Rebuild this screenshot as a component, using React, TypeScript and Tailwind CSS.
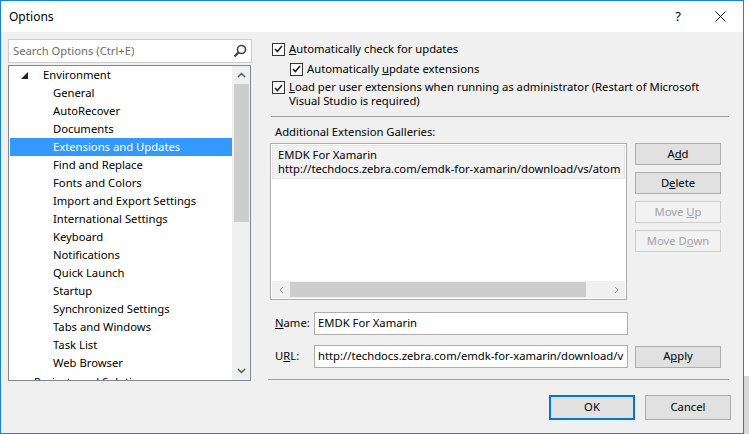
import React from "react";

const font = "[font-family:'Segoe_UI','Noto_Sans',sans-serif]";

const treeItems = [
  "General",
  "AutoRecover",
  "Documents",
  "Extensions and Updates",
  "Find and Replace",
  "Fonts and Colors",
  "Import and Export Settings",
  "International Settings",
  "Keyboard",
  "Notifications",
  "Quick Launch",
  "Startup",
  "Synchronized Settings",
  "Tabs and Windows",
  "Task List",
  "Web Browser",
];

const Check = () => (
  <div className="w-[13px] h-[13px] border border-[#333333] bg-white flex items-center justify-center shrink-0">
    <svg width="9" height="8" viewBox="0 0 9 8">
      <path d="M1 4 L3.4 6.5 L8 1" fill="none" stroke="#222" strokeWidth="1.6" />
    </svg>
  </div>
);

const Btn = ({ children, disabled }: { children: React.ReactNode; disabled?: boolean }) => (
  <div
    className={
      disabled
        ? "w-[86px] h-[22px] border border-[#cccccc] bg-[#f2f2f2] text-[#a3a3a3] flex items-center justify-center"
        : "w-[86px] h-[22px] border border-[#adadad] bg-[#e1e1e1] text-black flex items-center justify-center"
    }
  >
    <span>{children}</span>
  </div>
);

export default function App() {
  return (
    <div className={`flex w-[749px] h-[434px] bg-white text-[11.25px] text-black ${font}`}>
      <div className="w-[744px] h-[434px] border border-[#1883d7] flex flex-col bg-[#f0f0f0]">
        {/* title bar */}
        <div className="h-[31px] bg-white flex items-center shrink-0">
          <div className="pl-[8px] text-[12px] flex-1">Options</div>
          <div className="w-[14px] text-[13px] mr-[30px] text-center">?</div>
          <svg width="11" height="11" viewBox="0 0 11 11" className="mr-[17px]">
            <path d="M0.5 0.5 L10.5 10.5 M10.5 0.5 L0.5 10.5" stroke="#111" strokeWidth="1" />
          </svg>
        </div>

        <div className="flex flex-1">
          {/* left column */}
          <div className="w-[250px] pl-[7px] pt-[7px] shrink-0">
            <div className="h-[24px] w-[244px] border border-[#cccccc] bg-white flex items-center pl-[4px] pr-[4px]">
              <span className="flex-1 text-[#6d6d6d]">Search Options (Ctrl+E)</span>
              <svg width="14" height="14" viewBox="0 0 14 14">
                <circle cx="8.5" cy="5.5" r="4" fill="none" stroke="#444" strokeWidth="1.6" />
                <path d="M5.6 8.4 L1.5 12.5" stroke="#444" strokeWidth="2.2" />
              </svg>
            </div>
            <div className="mt-[2px] h-[316px] w-[243px] border border-[#828790] bg-white flex overflow-hidden">
              <div className="flex-1 pl-[1px] overflow-hidden">
                <div className="h-[18px] flex items-center">
                  <svg width="7" height="7" viewBox="0 0 7 7" className="ml-[11px] mr-[15px]">
                    <path d="M7 0 L7 7 L0 7 Z" fill="#222" />
                  </svg>
                  <span>Environment</span>
                </div>
                {treeItems.map((t) => (
                  <div
                    key={t}
                    className={
                      t === "Extensions and Updates"
                        ? "h-[18px] flex items-center pl-[43px] bg-[#3399ff] text-white"
                        : "h-[18px] flex items-center pl-[43px]"
                    }
                  >
                    {t}
                  </div>
                ))}
                <div className="h-[18px] mt-[1px] flex items-center pl-[24px] whitespace-nowrap">Projects and Solutions</div>
              </div>
              <div className="w-[18px] bg-[#f0f0f0] flex flex-col items-center shrink-0">
                <div className="h-[18px] flex items-center justify-center">
                  <svg width="9" height="6" viewBox="0 0 9 6">
                    <path d="M1 5 L4.5 1.5 L8 5" fill="none" stroke="#555" strokeWidth="1.5" />
                  </svg>
                </div>
                <div className="w-[15px] h-[138px] bg-[#cdcdcd]" />
                <div className="flex-1" />
                <div className="h-[18px] flex items-center justify-center">
                  <svg width="9" height="6" viewBox="0 0 9 6">
                    <path d="M1 1 L4.5 4.5 L8 1" fill="none" stroke="#555" strokeWidth="1.5" />
                  </svg>
                </div>
              </div>
            </div>
          </div>

          {/* right column */}
          <div className="flex-1 pl-[19px] pr-[14px] pt-[7px] flex flex-col">
            <div className="h-[20px] flex items-center gap-[4px] pl-[2px]">
              <Check />
              <span>
                <u>A</u>utomatically check for updates
              </span>
            </div>
            <div className="h-[20px] flex items-center gap-[4px] pl-[20px]">
              <Check />
              <span>
                Automatically <u>u</u>pdate extensions
              </span>
            </div>
            <div className="flex gap-[4px] pl-[2px] mt-[1px] leading-[14px]">
              <div className="pt-[1px]">
                <Check />
              </div>
              <div>
                <u>L</u>oad per user extensions when running as administrator (Restart of Microsoft
                <br />
                Visual Studio is required)
              </div>
            </div>
            <div className="mt-[8px] h-px bg-[#a0a0a0] ml-[1px]" />
            <div className="mt-[8px] h-[14px] leading-[14px] pl-[5px]">Additional Extension Galleries:</div>

            <div className="mt-[4px] flex gap-[8px]">
              <div className="w-[357px] h-[157px] border border-[#adadad] bg-white flex flex-col p-[1px]">
                <div className="h-[34px] bg-[#f2f2f2] border border-[#e6e6e6] flex flex-col justify-center pl-[5px] leading-[14px] whitespace-nowrap overflow-hidden">
                  <div>EMDK For Xamarin</div>
                  <div>http://techdocs.zebra.com/emdk-for-xamarin/download/vs/atom</div>
                </div>
                <div className="flex-1" />
                <div className="h-[17px] bg-[#f0f0f0] flex items-center">
                  <div className="w-[18px] flex justify-center">
                    <svg width="5" height="8" viewBox="0 0 5 8">
                      <path d="M4 1 L1 4 L4 7" fill="none" stroke="#999" strokeWidth="1" />
                    </svg>
                  </div>
                  <div className="w-[296px] h-[15px] bg-[#cdcdcd]" />
                  <div className="flex-1" />
                  <div className="w-[18px] flex justify-center">
                    <svg width="5" height="8" viewBox="0 0 5 8">
                      <path d="M1 1 L4 4 L1 7" fill="none" stroke="#999" strokeWidth="1" />
                    </svg>
                  </div>
                </div>
              </div>
              <div className="flex flex-col gap-[7px]">
                <Btn>
                  A<u>d</u>d
                </Btn>
                <Btn>
                  D<u>e</u>lete
                </Btn>
                <Btn disabled>
                  Move <u>U</u>p
                </Btn>
                <Btn disabled>
                  Move D<u>o</u>wn
                </Btn>
              </div>
            </div>

            <div className="mt-[12px] flex items-center h-[23px]">
              <div className="w-[44px] pl-[5px]">
                <u>N</u>ame:
              </div>
              <div className="w-[314px] h-[23px] border border-[#adadad] bg-white flex items-center pl-[3px]">
                EMDK For Xamarin
              </div>
            </div>
            <div className="mt-[10px] flex items-center h-[23px]">
              <div className="w-[44px] pl-[5px]">
                U<u>R</u>L:
              </div>
              <div className="w-[314px] h-[23px] border border-[#adadad] bg-white flex items-center pl-[3px] whitespace-nowrap overflow-hidden">
                http://techdocs.zebra.com/emdk-for-xamarin/download/v
              </div>
              <div className="ml-[7px]">
                <Btn>
                  A<u>p</u>ply
                </Btn>
              </div>
            </div>
            <div className="mt-[11px] h-px bg-[#a0a0a0] -ml-[2px]" />

            <div className="mt-[15px] flex justify-end gap-[10px] -mr-[2px]">
              <div className="w-[86px] h-[25px] border-2 border-[#0078d7] bg-[#e1e1e1] flex items-center justify-center">
                OK
              </div>
              <div className="w-[86px] h-[25px] border border-[#adadad] bg-[#e1e1e1] flex items-center justify-center">
                Cancel
              </div>
            </div>
          </div>
        </div>
      </div>
      <div className="flex-1 flex flex-col">
        <div className="h-[376px] bg-white" />
        <div className="flex-1 bg-[#d8d8d8]" />
      </div>
    </div>
  );
}
